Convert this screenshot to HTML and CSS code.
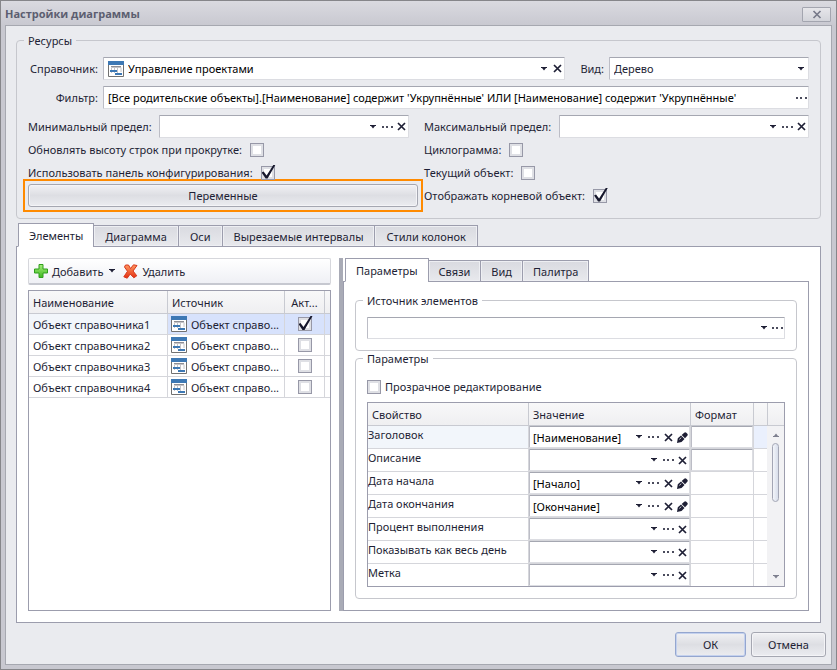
FILE: index.html
```
<!DOCTYPE html>
<html lang="ru">
<head>
  <meta charset="UTF-8">
  <meta name="viewport" content="width=device-width, initial-scale=1.0">
  <title>Настройки диаграммы</title>
  <link rel="stylesheet" href="styles.css">
</head>
<body>
  <svg class="sprite" aria-hidden="true">
    <symbol id="i-arrow" viewBox="0 0 6 4"><path d="M0 0h6v1H5L3 3.5 1 1H0z"/></symbol>
    <symbol id="i-dots" viewBox="0 0 11 2"><path d="M0 0h2v2H0zM4 0h2v2H4zM9 0h2v2H9z" opacity=".8"/></symbol>
    <symbol id="i-cross" viewBox="0 0 9 9"><path d="M1 1l7 7M8 1L1 8" fill="none" stroke="currentColor" stroke-width="1.7"/></symbol>
    <symbol id="i-pen" viewBox="0 0 11 11"><path d="M0 11l.8-4.800 3.200-2.700 3.500 3.500-3 3zM4.700 3L7.200.7Q8.300-.1 9.300.8l1 1q.9.9 0 1.900L8 6.300z"/><path d="M2.300 7.400l2-1.800" stroke="#fff" stroke-width=".8"/></symbol>
    <symbol id="i-catalog" viewBox="0 0 16 16">
      <path d="M.5 3.5h15v12H.5z" fill="#fff" stroke="#717171"/>
      <path d="M0 0h16v4H0z" fill="#3d78b4"/>
      <path d="M3.5 12V6.500h9.500V11M6.500 7v5M9.500 7v5" fill="none" stroke="#c4c4c8"/>
      <path d="M3 5.500h10" stroke="#8e8e94"/>
      <path d="M2 9h7v2H2zM7 12h7v2H7z" fill="#3d78b4"/>
    </symbol>
  </svg>

  <div class="dialog">
    <header class="titlebar">
      <h1>Настройки диаграммы</h1>
      <button class="close" aria-label="Закрыть"><svg width="10" height="9"><use href="#i-cross"/></svg></button>
    </header>

    <main class="content">
      <fieldset class="group">
        <legend>Ресурсы</legend>
        <div class="resources">
          <div class="row">
            <label class="lbl short" for="catalog">Справочник:</label>
            <div class="field">
              <svg class="pic" width="16" height="16"><use href="#i-catalog"/></svg>
              <input id="catalog" type="text" value="Управление проектами">
              <button aria-label="Список"><svg width="6" height="4"><use href="#i-arrow"/></svg></button>
              <button aria-label="Очистить"><svg width="9" height="9"><use href="#i-cross"/></svg></button>
            </div>
            <label class="lbl kind" for="kind">Вид:</label>
            <div class="field select">
              <select id="kind"><option>Дерево</option></select>
              <svg width="6" height="4"><use href="#i-arrow"/></svg>
            </div>
          </div>
          <div class="row">
            <label class="lbl short" for="filter">Фильтр:</label>
            <div class="field">
              <input id="filter" type="text" value="[Все родительские объекты].[Наименование] содержит 'Укрупнённые' ИЛИ [Наименование] содержит 'Укрупнённые'">
              <button class="end" aria-label="Выбрать"><svg width="11" height="2"><use href="#i-dots"/></svg></button>
            </div>
          </div>
          <div class="columns">
            <div class="row">
              <label class="lbl long" for="min">Минимальный предел:</label>
              <div class="field">
                <input id="min" type="text">
                <button aria-label="Список"><svg width="6" height="4"><use href="#i-arrow"/></svg></button>
                <button aria-label="Выбрать"><svg width="11" height="2"><use href="#i-dots"/></svg></button>
                <button aria-label="Очистить"><svg width="9" height="9"><use href="#i-cross"/></svg></button>
              </div>
            </div>
            <div class="row">
              <label class="lbl long" for="max">Максимальный предел:</label>
              <div class="field">
                <input id="max" type="text">
                <button aria-label="Список"><svg width="6" height="4"><use href="#i-arrow"/></svg></button>
                <button aria-label="Выбрать"><svg width="11" height="2"><use href="#i-dots"/></svg></button>
                <button aria-label="Очистить"><svg width="9" height="9"><use href="#i-cross"/></svg></button>
              </div>
            </div>
          </div>
          <div class="columns options">
            <label>Обновлять высоту строк при прокрутке: <input type="checkbox"></label>
            <label>Циклограмма: <input type="checkbox"></label>
            <label>Использовать панель конфигурирования: <input type="checkbox" checked></label>
            <label>Текущий объект: <input type="checkbox"></label>
            <div class="highlight"><button class="btn">Переменные</button></div>
            <label>Отображать корневой объект: <input type="checkbox" checked></label>
          </div>
        </div>
      </fieldset>

      <section class="tabbed main-tabs">
        <nav class="tabs wide">
          <button class="tab active">Элементы</button>
          <button class="tab">Диаграмма</button>
          <button class="tab">Оси</button>
          <button class="tab">Вырезаемые интервалы</button>
          <button class="tab">Стили колонок</button>
        </nav>
        <div class="panel split">
          <div class="left">
            <div class="toolbar">
              <button>
                <svg width="14" height="14" viewBox="0 0 14 14">
                  <defs><linearGradient id="green" x2="0" y2="1"><stop stop-color="#a5ee7c"/><stop offset="1" stop-color="#3fb81f"/></linearGradient></defs>
                  <path d="M5 .5h4V5h4.500v4H9v4.500H5V9H.5V5H5z" fill="url(#green)" stroke="#2f9e1c" stroke-linejoin="round"/>
                </svg>
                Добавить
                <svg class="caret" width="6" height="4"><use href="#i-arrow"/></svg>
              </button>
              <button>
                <svg width="15" height="15" viewBox="0 0 15 15">
                  <defs><linearGradient id="red" x2="0" y2="1"><stop stop-color="#ff9a62"/><stop offset="1" stop-color="#e22d10"/></linearGradient></defs>
                  <path d="M2.500 1L5.500 1l2 3.500L10.500.8l3.500.7-4 5.500 3.800 4.800-3 2L7.200 10l-3 4.200L.8 12.800l3.700-5.500L1.500 3z" fill="url(#red)" stroke="#d8371c" stroke-linejoin="round"/>
                </svg>
                Удалить
              </button>
            </div>
            <div class="grid-box">
              <table class="objects">
                <colgroup><col><col class="c-source"><col class="c-active"><col class="c-rest"></colgroup>
                <thead>
                  <tr><th>Наименование</th><th>Источник</th><th class="mid">Акт...</th><th></th></tr>
                </thead>
                <tbody>
                  <tr class="selected">
                    <td>Объект справочника1</td>
                    <td><div class="source"><svg width="16" height="16"><use href="#i-catalog"/></svg>Объект справо...</div></td>
                    <td class="mid"><input type="checkbox" aria-label="Активен" checked></td>
                    <td></td>
                  </tr>
                  <tr>
                    <td>Объект справочника2</td>
                    <td><div class="source"><svg width="16" height="16"><use href="#i-catalog"/></svg>Объект справо...</div></td>
                    <td class="mid"><input type="checkbox" aria-label="Активен"></td>
                    <td></td>
                  </tr>
                  <tr>
                    <td>Объект справочника3</td>
                    <td><div class="source"><svg width="16" height="16"><use href="#i-catalog"/></svg>Объект справо...</div></td>
                    <td class="mid"><input type="checkbox" aria-label="Активен"></td>
                    <td></td>
                  </tr>
                  <tr>
                    <td>Объект справочника4</td>
                    <td><div class="source"><svg width="16" height="16"><use href="#i-catalog"/></svg>Объект справо...</div></td>
                    <td class="mid"><input type="checkbox" aria-label="Активен"></td>
                    <td></td>
                  </tr>
                </tbody>
              </table>
            </div>
          </div>

          <div class="splitter"></div>

          <div class="tabbed">
            <nav class="tabs">
              <button class="tab active">Параметры</button>
              <button class="tab">Связи</button>
              <button class="tab">Вид</button>
              <button class="tab">Палитра</button>
            </nav>
            <div class="panel params">
              <fieldset class="group">
                <legend>Источник элементов</legend>
                <div class="field low">
                  <input type="text" aria-label="Источник элементов">
                  <button aria-label="Список"><svg width="6" height="4"><use href="#i-arrow"/></svg></button>
                  <button class="end" aria-label="Выбрать"><svg width="11" height="2"><use href="#i-dots"/></svg></button>
                </div>
              </fieldset>
              <fieldset class="group second">
                <legend>Параметры</legend>
                <label class="check"><input type="checkbox"> Прозрачное редактирование</label>
                <div class="prop-box">
                  <table class="props">
                    <colgroup><col><col class="c-value"><col class="c-format"><col class="c-tail"></colgroup>
                    <thead>
                      <tr><th>Свойство</th><th>Значение</th><th>Формат</th><th></th></tr>
                    </thead>
                    <tbody>
                      <tr class="current">
                        <td>Заголовок</td>
                        <td><div class="field cell"><input type="text" aria-label="Заголовок" value="[Наименование]"><button aria-label="Список"><svg width="6" height="4"><use href="#i-arrow"/></svg></button><button aria-label="Выбрать"><svg width="11" height="2"><use href="#i-dots"/></svg></button><button aria-label="Очистить"><svg width="9" height="9"><use href="#i-cross"/></svg></button><button aria-label="Изменить"><svg width="11" height="11"><use href="#i-pen"/></svg></button></div></td>
                        <td><div class="field cell"><input type="text" aria-label="Формат заголовка"></div></td>
                        <td></td>
                      </tr>
                      <tr>
                        <td>Описание</td>
                        <td><div class="field cell"><input type="text" aria-label="Описание"><button aria-label="Список"><svg width="6" height="4"><use href="#i-arrow"/></svg></button><button aria-label="Выбрать"><svg width="11" height="2"><use href="#i-dots"/></svg></button><button aria-label="Очистить"><svg width="9" height="9"><use href="#i-cross"/></svg></button></div></td>
                        <td><div class="field cell"><input type="text" aria-label="Формат описания"></div></td>
                        <td></td>
                      </tr>
                      <tr>
                        <td>Дата начала</td>
                        <td><div class="field cell"><input type="text" aria-label="Дата начала" value="[Начало]"><button aria-label="Список"><svg width="6" height="4"><use href="#i-arrow"/></svg></button><button aria-label="Выбрать"><svg width="11" height="2"><use href="#i-dots"/></svg></button><button aria-label="Очистить"><svg width="9" height="9"><use href="#i-cross"/></svg></button><button aria-label="Изменить"><svg width="11" height="11"><use href="#i-pen"/></svg></button></div></td>
                        <td></td>
                        <td></td>
                      </tr>
                      <tr>
                        <td>Дата окончания</td>
                        <td><div class="field cell"><input type="text" aria-label="Дата окончания" value="[Окончание]"><button aria-label="Список"><svg width="6" height="4"><use href="#i-arrow"/></svg></button><button aria-label="Выбрать"><svg width="11" height="2"><use href="#i-dots"/></svg></button><button aria-label="Очистить"><svg width="9" height="9"><use href="#i-cross"/></svg></button><button aria-label="Изменить"><svg width="11" height="11"><use href="#i-pen"/></svg></button></div></td>
                        <td></td>
                        <td></td>
                      </tr>
                      <tr>
                        <td>Процент выполнения</td>
                        <td><div class="field cell"><input type="text" aria-label="Процент выполнения"><button aria-label="Список"><svg width="6" height="4"><use href="#i-arrow"/></svg></button><button aria-label="Выбрать"><svg width="11" height="2"><use href="#i-dots"/></svg></button><button aria-label="Очистить"><svg width="9" height="9"><use href="#i-cross"/></svg></button></div></td>
                        <td></td>
                        <td></td>
                      </tr>
                      <tr>
                        <td>Показывать как весь день</td>
                        <td><div class="field cell"><input type="text" aria-label="Показывать как весь день"><button aria-label="Список"><svg width="6" height="4"><use href="#i-arrow"/></svg></button><button aria-label="Выбрать"><svg width="11" height="2"><use href="#i-dots"/></svg></button><button aria-label="Очистить"><svg width="9" height="9"><use href="#i-cross"/></svg></button></div></td>
                        <td></td>
                        <td></td>
                      </tr>
                      <tr>
                        <td>Метка</td>
                        <td><div class="field cell"><input type="text" aria-label="Метка"><button aria-label="Список"><svg width="6" height="4"><use href="#i-arrow"/></svg></button><button aria-label="Выбрать"><svg width="11" height="2"><use href="#i-dots"/></svg></button><button aria-label="Очистить"><svg width="9" height="9"><use href="#i-cross"/></svg></button></div></td>
                        <td></td>
                        <td></td>
                      </tr>
                    </tbody>
                  </table>
                  <div class="scroll">
                    <div class="scroll-head"></div>
                    <div class="scroll-track">
                      <svg class="up" width="6" height="4"><use href="#i-arrow"/></svg>
                      <div class="thumb"></div>
                      <svg class="down" width="6" height="4"><use href="#i-arrow"/></svg>
                    </div>
                  </div>
                </div>
              </fieldset>
            </div>
          </div>
        </div>
      </section>

      <footer class="actions">
        <button class="btn default">ОК</button>
        <button class="btn cancel">Отмена</button>
      </footer>
    </main>
  </div>
</body>
</html>
```

FILE: styles.css
```
* {
  box-sizing: border-box;
}
body {
  margin: 0;
  font: 11px/17px "Noto Sans", "Open Sans", sans-serif;
  color: #1e1f35;
}
button,
input,
select {
  font: inherit;
  color: inherit;
  margin: 0;
}
svg {
  display: block;
  flex: none;
  fill: currentColor;
}
.sprite {
  position: absolute;
  width: 0;
  height: 0;
}

/* window */
.dialog {
  display: flex;
  flex-direction: column;
  min-height: 100vh;
  padding: 0 4px 4px;
  border: 1px solid #86868a;
  background: linear-gradient(#dadae0, #c8c8d0 25px);
}
.titlebar {
  display: flex;
  align-items: center;
  justify-content: space-between;
  height: 24px;
}
.titlebar h1 {
  margin: 0;
  font-family: "Open Sans", sans-serif;
  font-size: 11px;
  font-weight: 700;
  color: #5c5e70;
}
.close {
  display: flex;
  align-items: center;
  justify-content: center;
  width: 29px;
  height: 15px;
  margin-right: 1px;
  margin-top: 3px;
  padding: 0;
  border: 1px solid #a3a5af;
  border-radius: 1px;
  background: linear-gradient(#e6e6ea, #d3d4da);
  color: #777a8a;
}
.content {
  display: flex;
  flex-direction: column;
  flex: 1;
  padding: 6px 10px 7px;
  border: 1px solid #a6a8b0;
  background: #eaebef;
}

/* group boxes */
.group {
  min-width: 0;
  margin: 0;
  padding: 8px 11px 11px;
  border: 1px solid #c6c7cd;
  border-radius: 4px;
}
.group legend {
  margin-left: -4px;
  padding: 0 4px;
}
.resources {
  display: flex;
  flex-direction: column;
  gap: 6px;
}
.row {
  display: flex;
  align-items: center;
  gap: 5px;
  min-width: 0;
}
.columns {
  display: grid;
  grid-template-columns: 381fr 385fr;
  column-gap: 15px;
}
.options {
  grid-auto-rows: 23px;
  margin-top: -6px;
}
.options label {
  display: flex;
  align-items: center;
  gap: 8px;
  white-space: nowrap;
}
.lbl {
  flex: none;
  white-space: nowrap;
}
.short {
  width: 70px;
  text-align: right;
}
.long {
  width: 126px;
}
.row + .row .long {
  width: 130px;
}
.kind {
  margin-left: 10px;
}

/* fields */
.field {
  display: flex;
  align-items: center;
  flex: 1;
  min-width: 0;
  height: 23px;
  padding: 0 0 0 4px;
  border: 1px solid #dcdde2;
  border-top-color: #a5a7b1;
  border-left-color: #bcbdc6;
  border-radius: 1px;
  background: #fff;
}
.field input {
  flex: 1;
  width: 0;
  min-width: 0;
  padding: 0;
  border: 0;
  outline: 0;
  background: none;
  color: #000;
}
.field button {
  display: flex;
  align-items: center;
  justify-content: center;
  flex: none;
  width: 15px;
  height: 17px;
  padding: 0;
  border: 0;
  background: none;
}
.field button:last-child {
  width: 13px;
}
.pic {
  margin-right: 4px;
}
.select {
  position: relative;
  flex: 0 0 200px;
  padding: 0;
}
.select select {
  appearance: none;
  width: 100%;
  height: 21px;
  padding: 0 16px 0 4px;
  border: 0;
  background: none;
}
.select svg {
  position: absolute;
  top: 9px;
  right: 4px;
  pointer-events: none;
}
.low {
  height: 22px;
}

/* check boxes */
input[type="checkbox"] {
  position: relative;
  appearance: none;
  flex: none;
  width: 14px;
  height: 14px;
  border: 1px solid #9798a7;
  background: #fff;
  box-shadow: inset 0 0 0 2px #dfe0e5;
}
input[type="checkbox"]:checked::after {
  content: "";
  position: absolute;
  top: -2px;
  left: 0;
  width: 15px;
  height: 16px;
  background: #17182d;
  clip-path: polygon(0 8px, 2px 7px, 5px 11px, 12px 0, 14px 0, 6px 14px, 4px 14px);
}

/* buttons */
.btn {
  height: 25px;
  padding: 0 16px;
  border: 1px solid #a5a7b1;
  border-radius: 3px;
  background: linear-gradient(#f1f1f4, #dddee3 50%, #ebecf0);
  box-shadow: inset 0 0 0 1px #f4f4f7;
}
.highlight {
  margin: -5px -14px -5px -5px;
  padding: 3px;
  border: 2px solid #ff8a00;
}
.highlight .btn {
  display: block;
  width: 100%;
  height: 23px;
}
.default {
  width: 71px;
  border-color: #94a6cf;
  box-shadow: inset 0 0 0 1px #c4d1ee;
}
.cancel {
  width: 75px;
}
.actions {
  display: flex;
  justify-content: flex-end;
  gap: 5px;
  margin-top: 9px;
  margin-right: -5px;
}

/* tabs */
.tabbed {
  display: flex;
  flex-direction: column;
  min-width: 0;
}
.main-tabs {
  flex: 1;
  margin-top: 4px;
}
.tabs {
  position: relative;
  display: flex;
  align-items: flex-end;
  height: 24px;
  margin: 0 0 -1px 2px;
}
.tab {
  height: 22px;
  margin-left: -1px;
  padding: 0 10px;
  border: 1px solid #9c9dad;
  background: linear-gradient(#d9dae0, #e8e9ed);
  box-shadow: inset 0 0 0 1px #eeeff3;
  white-space: nowrap;
}
.wide .tab {
  padding: 0 11px;
}
.tabs .active {
  height: 24px;
  margin-left: 0;
  padding: 0 10px;
  border-bottom-color: #fff;
  background: #fff;
  box-shadow: none;
}
.panel {
  flex: 1;
  padding: 11px;
  border: 1px solid #9c9dad;
  background: #fff;
}
.split {
  display: grid;
  grid-template-columns: minmax(0, 303fr) 8px 4px minmax(0, 466fr);
}
.left {
  display: flex;
  flex-direction: column;
}
.splitter {
  grid-column: 3;
  background: #a9abb6;
}
.params {
  padding-top: 10px;
}
.second {
  margin-top: -1px;
}
.check {
  display: flex;
  align-items: center;
  gap: 4px;
  height: 23px;
}

/* toolbar */
.toolbar {
  display: flex;
  align-items: center;
  gap: 8px;
  height: 27px;
  margin-bottom: 5px;
  padding: 0 5px;
  border: 1px solid #d6d7dc;
  border-bottom: 2px solid #c6c8d0;
  border-radius: 2px;
  background: linear-gradient(#fff, #eff0f5);
}
.toolbar button {
  display: flex;
  align-items: center;
  gap: 4px;
  padding: 0;
  border: 0;
  background: none;
}
.toolbar .caret {
  margin-left: 2px;
}

/* tables */
table {
  width: 100%;
  table-layout: fixed;
  border-collapse: separate;
  border-spacing: 0;
}
th,
td {
  padding: 0 4px;
  border-right: 1px solid #d5d6db;
  border-bottom: 1px solid #d5d6db;
  text-align: left;
  font-weight: 400;
  white-space: nowrap;
  overflow: hidden;
}
th {
  height: 23px;
  border-color: #c8cad1;
  background: linear-gradient(#f8f8f9, #efeff1);
}
tr > :last-child {
  border-right: 0;
}
.grid-box {
  flex: 1;
  border: 1px solid #9c9dad;
}
.objects td {
  height: 21px;
}
.objects td:nth-child(2) {
  padding-left: 3px;
}
.objects .mid {
  padding: 0;
  text-align: center;
}
.objects td input {
  display: block;
  margin: 0 auto;
}
.c-source {
  width: 117px;
}
.c-active {
  width: 40px;
}
.c-rest {
  width: 5px;
}
.selected td {
  background: #d7e2fc;
}
.selected td:first-child,
.current td:first-child {
  background: #f2f6fb;
}
.source {
  display: flex;
  align-items: center;
  gap: 4px;
}
.prop-box {
  display: flex;
  margin-top: 4px;
  border: 1px solid #9c9dad;
}
.props {
  flex: 1;
  width: auto;
  min-width: 0;
}
.props td {
  height: 23px;
  padding: 0;
  vertical-align: top;
}
.props tr:last-child td {
  height: 22px;
  border-bottom: 0;
}
.props tr.current td:last-child {
  background: #eaf0fd;
}
.c-value {
  width: 162px;
}
.c-format {
  width: 63px;
}
.c-tail {
  width: 13px;
}
.cell {
  height: 22px;
  padding: 0 0 0 3px;
}
.scroll {
  display: flex;
  flex-direction: column;
  width: 17px;
}
.scroll-head {
  height: 23px;
  border-left: 1px solid #c8cad1;
  border-bottom: 1px solid #c8cad1;
  background: linear-gradient(#f8f8f9, #efeff1);
}
.scroll-track {
  display: flex;
  flex-direction: column;
  align-items: center;
  flex: 1;
  padding: 7px 0;
  background: #f2f2f4;
  color: #7d7f8e;
}
.up {
  transform: rotate(180deg);
}
.thumb {
  width: 7px;
  height: 59px;
  margin-top: 6px;
  border: 1px solid #a3a6b5;
  border-radius: 4px;
  background: linear-gradient(90deg, #f3f5fa, #d8deeb);
}
.down {
  margin-top: auto;
}
```
